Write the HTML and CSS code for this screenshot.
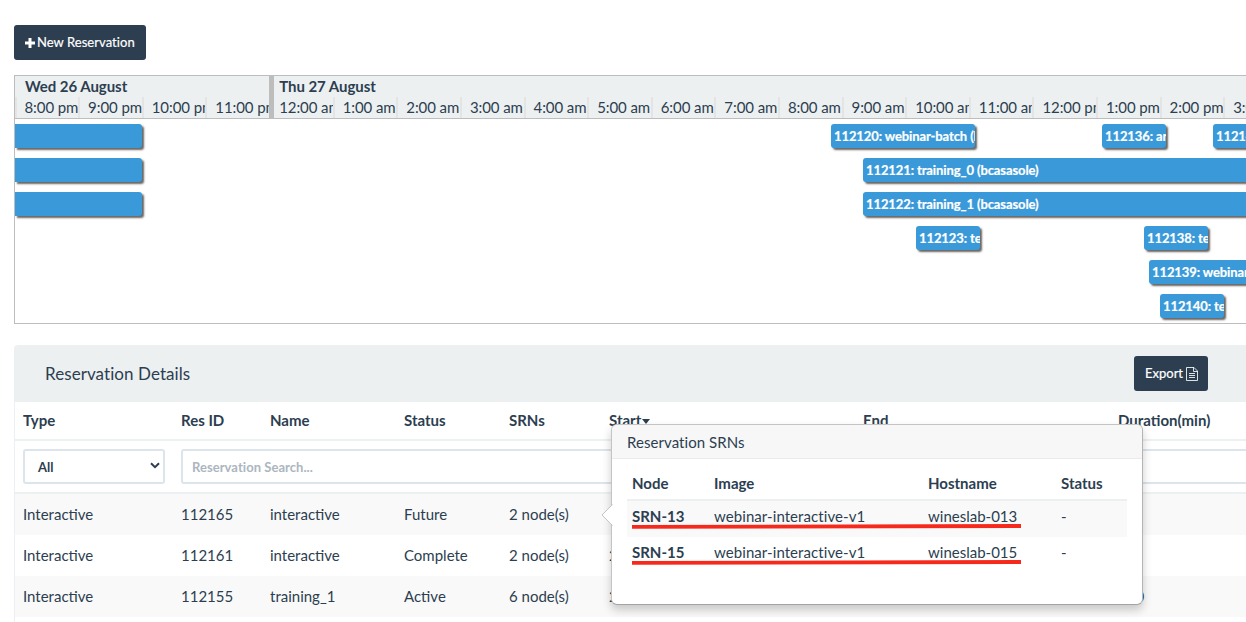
FILE: index.html
```html
<!DOCTYPE html>
<html lang="en">
<head>
<meta charset="utf-8">
<title>Reservations</title>
<link rel="stylesheet" href="styles.css">
</head>
<body>
<main class="page">
  <button class="btn btn-new"><svg class="icon-plus" viewBox="0 0 10 10"><path d="M3.500 0h3v3.500H10v3H6.500V10h-3V6.500H0v-3h3.500z" fill="currentColor"/></svg>New Reservation</button>

  <section class="timeline">
    <div class="axis">
      <div class="day">
        <div class="day-name">Wed 26 August</div>
        <div class="hours"><span>8:00 pm</span><span>9:00 pm</span><span>10:00 pm</span><span>11:00 pm</span></div>
      </div>
      <div class="day day-next">
        <div class="day-name">Thu 27 August</div>
        <div class="hours"><span>12:00 am</span><span>1:00 am</span><span>2:00 am</span><span>3:00 am</span><span>4:00 am</span><span>5:00 am</span><span>6:00 am</span><span>7:00 am</span><span>8:00 am</span><span>9:00 am</span><span>10:00 am</span><span>11:00 am</span><span>12:00 pm</span><span>1:00 pm</span><span>2:00 pm</span><span>3:00 pm</span></div>
      </div>
    </div>
    <div class="lanes">
      <div class="lane"><div class="event past" style="width:127px"></div><div class="event" style="margin-left:689px;width:144px">112120: webinar-batch (bcasasole)</div><div class="event" style="margin-left:127px;width:64px">112136: array</div><div class="event" style="margin-left:47px;width:200px">112141: webinar</div></div>
      <div class="lane"><div class="event past" style="width:127px"></div><div class="event" style="margin-left:721px;width:500px">112121: training_0 (bcasasole)</div></div>
      <div class="lane"><div class="event past" style="width:127px"></div><div class="event" style="margin-left:721px;width:500px">112122: training_1 (bcasasole)</div></div>
      <div class="lane"><div class="event" style="margin-left:901px;width:64px">112123: test</div><div class="event" style="margin-left:164px;width:64px">112138: test</div></div>
      <div class="lane"><div class="event" style="margin-left:1134px;width:200px">112139: webinar-batch</div></div>
      <div class="lane"><div class="event" style="margin-left:1145px;width:64px">112140: test</div></div>
    </div>
  </section>

  <section class="panel">
    <header class="panel-head">
      <h2 class="panel-title">Reservation Details</h2>
      <button class="btn btn-export">Export<svg class="icon-file" viewBox="0 0 12 14"><path d="M.5.5h7.500l3.500 3.500v9.500H.5zM7.500.5v4h4M3 6.500h6M3 8.500h6M3 10.500h6" fill="none" stroke="currentColor" stroke-width=".85"/></svg></button>
    </header>
    <table class="grid">
      <colgroup><col class="c-type"><col class="c-id"><col class="c-name"><col class="c-status"><col class="c-srns"><col class="c-start"><col class="c-end"><col class="c-dur"></colgroup>
      <thead>
        <tr class="titles"><th>Type</th><th>Res ID</th><th>Name</th><th>Status</th><th>SRNs</th><th>Start<i class="caret"></i></th><th>End</th><th>Duration(min)</th></tr>
        <tr class="filters">
          <th><div class="field select"><span>All</span><svg class="chevron" viewBox="0 0 10 7"><path d="M1 1.2l4 4 4-4" fill="none" stroke="currentColor" stroke-width="2"/></svg></div></th>
          <th colspan="7"><div class="field search">Reservation Search...</div></th>
        </tr>
      </thead>
      <tbody>
        <tr><td>Interactive</td><td>112165</td><td>interactive</td><td>Future</td><td>2 node(s)</td><td>2020-08-28</td><td>2020-08-28</td><td>60</td></tr>
        <tr><td>Interactive</td><td>112161</td><td>interactive</td><td>Complete</td><td>2 node(s)</td><td>2020-08-27</td><td>2020-08-27</td><td>60</td></tr>
        <tr><td>Interactive</td><td>112155</td><td>training_1</td><td>Active</td><td>6 node(s)</td><td>2020-08-27</td><td>2020-08-27</td><td>480</td></tr>
      </tbody>
    </table>
  </section>
</main>

<aside class="popover">
  <svg class="pointer" viewBox="0 0 12 22"><path d="M12 0L1 11l11 11z" fill="#fff"/><path d="M11.500 .5L1 11l10.500 10.500" fill="none" stroke="#c4c4c4"/></svg>
  <h3 class="popover-title">Reservation SRNs</h3>
  <table class="nodes">
    <colgroup><col class="n-node"><col class="n-image"><col class="n-host"><col class="n-status"></colgroup>
    <thead><tr><th>Node</th><th>Image</th><th>Hostname</th><th>Status</th></tr></thead>
    <tbody>
      <tr><th>SRN-13</th><td>webinar-interactive-v1</td><td>wineslab-013</td><td>-</td></tr>
      <tr><th>SRN-15</th><td>webinar-interactive-v1</td><td>wineslab-015</td><td>-</td></tr>
    </tbody>
  </table>
  <svg class="marks" viewBox="0 0 389 42"><path d="M0 2.800L389 2M0 38.800L389 38" stroke="#f62a1c" stroke-width="3.800"/></svg>
</aside>
</body>
</html>
```
FILE: styles.css
```css
* { box-sizing: border-box; }
body {
  margin: 0;
  width: 1246px;
  height: 622px;
  overflow: hidden;
  position: relative;
  background: #fff;
  color: #2c3e50;
  font: 15px/21px Lato, sans-serif;
}
.page { padding: 25px 0 0 14px; }
.btn {
  display: flex;
  align-items: center;
  height: 35px;
  padding: 0 11px;
  border: 0;
  border-radius: 3px;
  background: #2c3e50;
  color: #fff;
  font: 13px/19px Lato, sans-serif;
  white-space: nowrap;
  -webkit-text-stroke: .2px currentColor;
}
.btn-new { width: 132px; letter-spacing: .05px; }
.icon-plus { flex: none; width: 10px; height: 10px; margin-right: 2px; }
.icon-file { flex: none; width: 12px; height: 14px; margin-left: 3px; }

.timeline {
  height: 249px;
  margin-top: 15px;
  border: 1px solid #bdbdbd;
  border-right: 0;
  overflow: hidden;
}
.axis {
  display: flex;
  height: 43px;
  background: #ecf0f1;
  border-bottom: 1px solid #bdbdbd;
  overflow: hidden;
}
.day { flex: none; width: 254.200px; }
.day-next { width: 1100px; border-left: 5px solid #bdbdbd; }
.day-name { height: 21px; padding-left: 10px; font-weight: 700; letter-spacing: -.05px; }
.day-next .day-name { padding-left: 5px; }
.hours { display: flex; height: 21px; margin-left: -.5px; letter-spacing: -.08px; }
.hours span {
  flex: none;
  width: 63.620px;
  padding-left: 8px;
  border-left: 2px solid #e4e4e4;
  overflow: hidden;
  white-space: nowrap;
}
.day-next .hours { margin-left: 0; }
.day-next .hours span:first-child { width: 58.500px; padding-left: 5px; border-left: 0; }

.lanes { padding-top: 5px; }
.lane { display: flex; height: 34px; }
.event {
  flex: none;
  height: 24px;
  padding-left: 3px;
  border-radius: 3px;
  background: #3a99d8;
  box-shadow: 2px 2px 2px #6a6664;
  color: #fff;
  font: 700 13px/24px Lato, sans-serif;
  letter-spacing: -.1px;
  -webkit-text-stroke: .2px currentColor;
  white-space: nowrap;
  overflow: hidden;
}
.event.past { border-radius: 0 3px 3px 0; }

.panel {
  height: 300px;
  margin-top: 21px;
  border: 1px solid #ecf0f1;
  border-right: 0;
  border-radius: 4px 0 0 0;
  overflow: hidden;
}
.panel-head {
  display: flex;
  align-items: center;
  justify-content: space-between;
  height: 56px;
  padding: 0 38px 1px 30px;
  background: #ecf0f1;
}
.panel-title { margin: 0; font-size: 17px; font-weight: 400; letter-spacing: .07px; }
.btn-export { width: 74px; }

.grid { table-layout: fixed; border-collapse: separate; border-spacing: 0; width: 1295px; }
.c-type { width: 158px; }
.c-id { width: 89px; }
.c-name { width: 134px; }
.c-status { width: 105px; }
.c-srns { width: 100px; }
.c-start { width: 254px; }
.c-end { width: 255px; }
.c-dur { width: 200px; }
.grid th, .grid td { padding: 0 8px; text-align: left; white-space: nowrap; }
.titles th { height: 39px; padding-bottom: 1px; border-bottom: 2px solid #ecf0f1; }
.filters th { height: 53px; border-bottom: 2px solid #ecf0f1; }
.grid td { height: 41px; }
.grid tbody tr:nth-child(odd) { background: #f9f9f9; }
.caret {
  display: inline-block;
  vertical-align: middle;
  margin-left: 1px;
  border: 4.500px solid transparent;
  border-top: 5px solid #2c3e50;
  border-bottom: 0;
}
.field {
  display: flex;
  align-items: center;
  height: 35px;
  padding-top: 2px;
  border: 2px solid #dce4ec;
  border-radius: 3px;
  background: #fff;
  font-size: 13px;
}
.select { justify-content: space-between; padding: 2px 3px 0 13px; }
.search { padding-left: 9px; color: #acb6c0; letter-spacing: .05px; }
.chevron { width: 10px; height: 7px; margin-bottom: 4px; }

.popover {
  position: absolute;
  left: 611px;
  top: 424px;
  width: 532px;
  height: 181px;
  border: 1px solid #b8b8b8;
  border-color: #c4c4c4 #b4b4b4 #a4a4a4 #c4c4c4;
  border-radius: 6px;
  background: #fff;
  box-shadow: 0 5px 10px rgba(0, 0, 0, .2);
}
.pointer { position: absolute; left: -11px; top: 79px; width: 12px; height: 22px; }
.popover-title {
  margin: 0;
  height: 34px;
  padding: 7px 15px 0;
  border-bottom: 1px solid #ebebeb;
  border-radius: 5px 5px 0 0;
  background: #f7f7f7;
  font-size: 15px;
  font-weight: 400;
  letter-spacing: .06px;
}
.nodes { table-layout: fixed; border-collapse: separate; border-spacing: 0; width: 500px; margin: 9px 0 0 15px; }
.n-node { width: 82px; }
.n-image { width: 214px; }
.n-host { width: 133px; }
.n-status { width: 71px; }
.nodes th, .nodes td { height: 36px; padding: 0 5px 5px; text-align: left; white-space: nowrap; }
.nodes td:nth-child(2) { letter-spacing: .07px; }
.nodes thead th { height: 33px; padding-bottom: 1px; border-bottom: 2px solid #ecf0f1; }
.nodes tbody tr:first-child { background: #f9f9f9; }
.marks { position: absolute; left: 20px; top: 99px; width: 389px; height: 42px; }
```
